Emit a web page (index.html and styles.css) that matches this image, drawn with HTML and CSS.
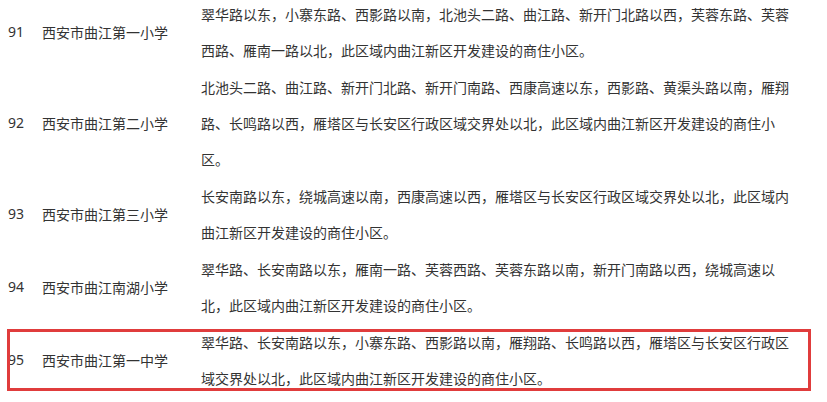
FILE: index.html
```html
<!DOCTYPE html>
<html lang="zh-CN">
<head>
<meta charset="utf-8">
<title>学区划分</title>
<link rel="stylesheet" href="styles.css">
</head>
<body>
<div class="list">
  <div class="row">
    <div class="num">91</div>
    <div class="name">西安市曲江第一小学</div>
    <div class="area">翠华路以东，小寨东路、西影路以南，北池头二路、曲江路、新开门北路以西，芙蓉东路、芙蓉西路、雁南一路以北，此区域内曲江新区开发建设的商住小区。</div>
  </div>
  <div class="row">
    <div class="num">92</div>
    <div class="name">西安市曲江第二小学</div>
    <div class="area">北池头二路、曲江路、新开门北路、新开门南路、西康高速以东，西影路、黄渠头路以南，雁翔路、长鸣路以西，雁塔区与长安区行政区域交界处以北，此区域内曲江新区开发建设的商住小区。</div>
  </div>
  <div class="row">
    <div class="num">93</div>
    <div class="name">西安市曲江第三小学</div>
    <div class="area">长安南路以东，绕城高速以南，西康高速以西，雁塔区与长安区行政区域交界处以北，此区域内曲江新区开发建设的商住小区。</div>
  </div>
  <div class="row">
    <div class="num">94</div>
    <div class="name">西安市曲江南湖小学</div>
    <div class="area">翠华路、长安南路以东，雁南一路、芙蓉西路、芙蓉东路以南，新开门南路以西，绕城高速以北，此区域内曲江新区开发建设的商住小区。</div>
  </div>
  <div class="row">
    <div class="num">95</div>
    <div class="name">西安市曲江第一中学</div>
    <div class="area">翠华路、长安南路以东，小寨东路、西影路以南，雁翔路、长鸣路以西，雁塔区与长安区行政区域交界处以北，此区域内曲江新区开发建设的商住小区。</div>
  </div>
  <div class="highlight"></div>
</div>
</body>
</html>
```

FILE: styles.css
```css
html, body {
  margin: 0;
  padding: 0;
  background: #ffffff;
  overflow: hidden;
}

body {
  font-family: "Noto Sans CJK SC", "Noto Sans", sans-serif;
  font-size: 14px;
  color: #333333;
}

.list {
  position: relative;
  display: flex;
  flex-direction: column;
  gap: 1px;
  margin-top: -4px;
  padding-left: 8px;
}

.row {
  display: grid;
  grid-template-columns: 34px 159px 596px;
  align-items: center;
  line-height: 36px;
}

.num {
  font-family: "Noto Sans", "Noto Sans CJK SC", sans-serif;
}

.name {
  white-space: nowrap;
}

.area {
  line-break: strict;
}

.highlight {
  position: absolute;
  left: 7px;
  top: 333px;
  width: 798px;
  height: 56px;
  border: 3px solid #e03c3c;
  pointer-events: none;
}
```
